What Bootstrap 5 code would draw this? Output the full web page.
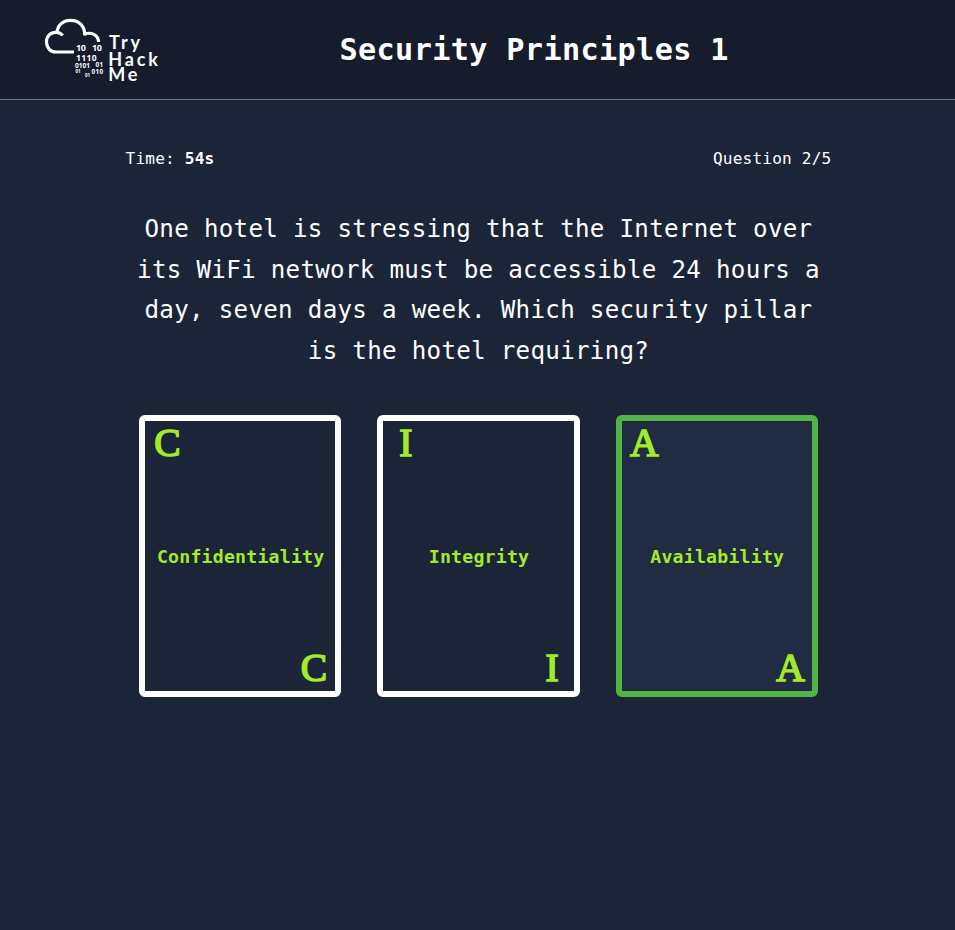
<!DOCTYPE html>
<html lang="en">
<head>
<meta charset="utf-8">
<meta name="viewport" content="width=device-width, initial-scale=1">
<title>Security Principles 1</title>
<link href="https://cdn.jsdelivr.net/npm/bootstrap@5.3.0/dist/css/bootstrap.min.css" rel="stylesheet">
<style>
  body { background: #1c2538; color: #fff; font-family: "DejaVu Sans Mono", monospace; }
  .quiz-title, .quiz-meta, .question, .answer-label { letter-spacing: .012em; }
  .quiz-header { height: 100px; background: #161c2b; border-bottom: 1px solid #6f7680; }
  .quiz-header svg { margin-left: 40px; }
  .quiz-title { font-size: 30.2px; line-height: 40px; margin-left: 173.5px; padding-top: 1px; }
  .quiz-body { width: 706px; margin-left: 125.5px; padding-top: 45px; }
  .quiz-meta { font-size: 16.1px; line-height: 27px; }
  .question { font-size: 24.18px; line-height: 40.6px; margin: 37px 0 44px; }
  .answers { gap: 36px; }
  .answer { width: 202.3px; height: 282px; border: 6px solid #fff; border-radius: 6px; background: transparent; color: #a3ea2a; padding: 4px 3px 4px 4px; }
  .answer.selected { border-color: #50b546; background: #212c42; }
  .answer-label { font-size: 18.2px; line-height: 28px; padding-top: 1px; }
  .corner { width: 37px; font: 39.5px/37px "Liberation Serif", serif; -webkit-text-stroke: 1.6px #a3ea2a; }
</style>
<script src="https://cdn.jsdelivr.net/npm/bootstrap@5.3.0/dist/js/bootstrap.bundle.min.js"></script>
</head>
<body>
<header class="quiz-header d-flex align-items-center">
  <svg width="126" height="76" viewBox="40 12 126 76" fill="#fff" role="img" aria-label="TryHackMe">
    <g fill="none" stroke="#fff" stroke-width="3.2">
      <path d="M74 52H56C50 52 46.500 47.500 46.500 42C46.500 36 50.500 32.300 56 32.300C58.800 32.300 61 33 62.600 35.500"/>
      <path d="M57 33C57.200 25.500 62.700 20.400 70.500 20.400C79 20.400 85 26 84.600 35.200M84 34.500C91 31.200 98.300 35 98.600 42"/>
    </g>
    <g font-family="Open Sans, sans-serif" font-weight="700">
      <text x="76" y="50.800" font-size="9" textLength="10">10</text>
      <text x="92" y="50.800" font-size="9" textLength="10">10</text>
      <text x="76" y="60.800" font-size="8.500" textLength="20.500">1110</text>
      <text x="75" y="67.700" font-size="6.500" textLength="15">0101</text>
      <text x="95.500" y="67.400" font-size="6.300" textLength="7.500">01</text>
      <text x="75.500" y="73" font-size="4.500" textLength="5">01</text>
      <text x="91.500" y="73.500" font-size="6.300" textLength="11.500">010</text>
      <text x="85" y="77.200" font-size="4.500" textLength="5">01</text>
    </g>
    <g font-family="Lato, sans-serif" font-weight="700" font-size="18">
      <text x="109" y="48.500" textLength="31">Try</text>
      <text x="108.300" y="65.500" textLength="49.500">Hack</text>
      <text x="108.300" y="81.300" textLength="29">Me</text>
    </g>
  </svg>
  <h1 class="quiz-title fw-bold mb-0">Security Principles 1</h1>
</header>
<main class="quiz-body">
  <div class="quiz-meta d-flex justify-content-between">
    <span>Time: <strong>54s</strong></span>
    <span>Question 2/5</span>
  </div>
  <p class="question text-center">One hotel is stressing that the Internet over<br>its WiFi network must be accessible 24 hours a<br>day, seven days a week. Which security pillar<br>is the hotel requiring?</p>
  <div class="answers d-flex justify-content-center">
    <button type="button" class="answer d-flex flex-column justify-content-between">
      <span class="corner text-center">C</span>
      <span class="answer-label fw-bold align-self-center">Confidentiality</span>
      <span class="corner text-center align-self-end">C</span>
    </button>
    <button type="button" class="answer d-flex flex-column justify-content-between">
      <span class="corner text-center">I</span>
      <span class="answer-label fw-bold align-self-center">Integrity</span>
      <span class="corner text-center align-self-end">I</span>
    </button>
    <button type="button" class="answer selected d-flex flex-column justify-content-between">
      <span class="corner text-center">A</span>
      <span class="answer-label fw-bold align-self-center">Availability</span>
      <span class="corner text-center align-self-end">A</span>
    </button>
  </div>
</main>
</body>
</html>
